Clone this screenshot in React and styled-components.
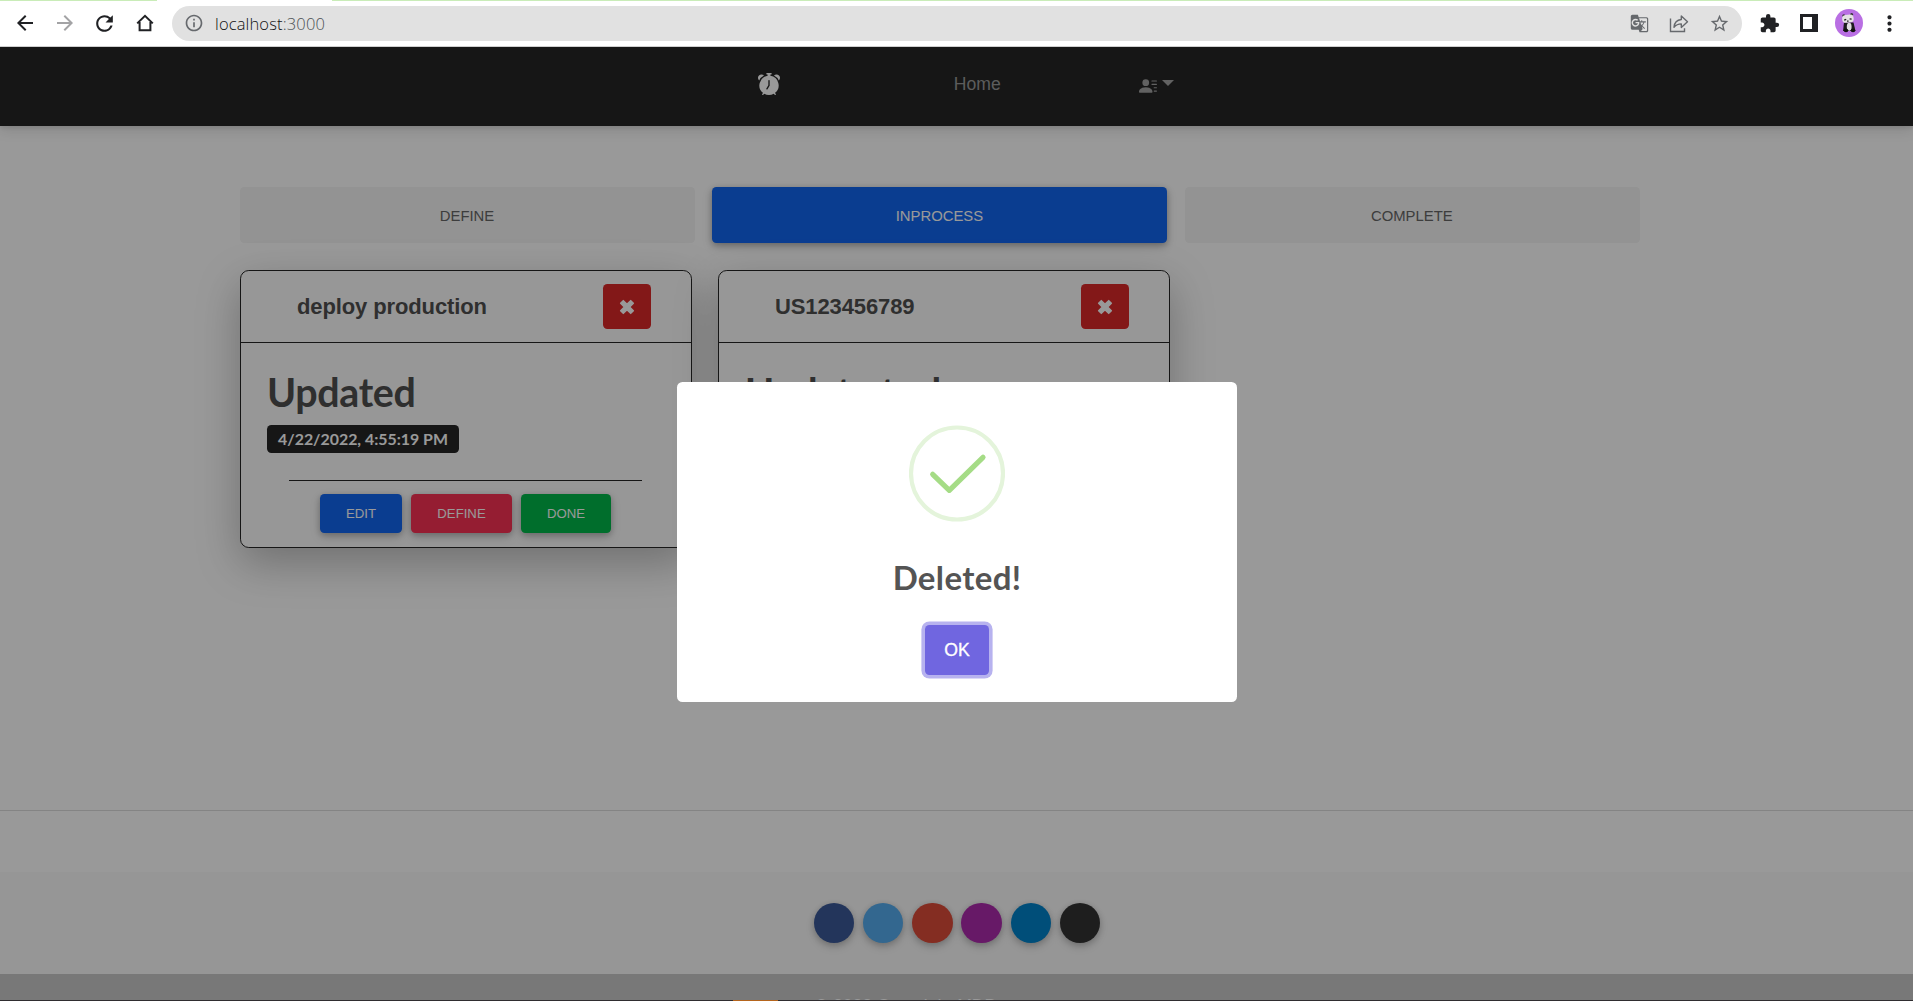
import React from "react";
import styled, { createGlobalStyle, css } from "styled-components";
import {
  MdArrowBack,
  MdArrowForward,
  MdRefresh,
  MdInfoOutline,
  MdGTranslate,
  MdStarBorder,
  MdExtension,
  MdMoreVert,
} from "react-icons/md";
import { BsAlarmFill, BsPersonLinesFill } from "react-icons/bs";

const sans = `"Liberation Sans", Arial, sans-serif`;
const lato = `Lato, "Open Sans", sans-serif`;

const GlobalStyle = createGlobalStyle`
  *, *::before, *::after { box-sizing: border-box; }
  body { margin: 0; background: #fff; font-family: ${sans}; overflow: hidden; }
  button { font-family: inherit; border: 0; margin: 0; padding: 0; }
  h1, h2, h5, p { margin: 0; }
  svg { display: block; flex: none; }
`;

const Window = styled.div`
  display: flex;
  flex-direction: column;
  width: 100%;
  height: 1001px;
  overflow: hidden;
`;

/* Browser toolbar */
const TabEdge = styled.div`
  display: flex;
  justify-content: space-between;
  height: 1px;
  flex: none;
`;
const TabStrip = styled.span`
  width: ${(p) => p.$width}px;
  background: #c9ecb8;
`;
const Toolbar = styled.div`
  display: flex;
  align-items: center;
  flex: none;
  height: 46px;
  padding: 0 4px 1px 4.5px;
  background: #fff;
  border-bottom: 1px solid #cfcfcf;
`;
const ToolCell = styled.span`
  display: flex;
  align-items: center;
  justify-content: center;
  width: 40px;
  height: 35px;
  color: ${(p) => p.$color || "#202124"};
`;
const AddressBar = styled.div`
  display: flex;
  align-items: center;
  flex: 1;
  height: 35px;
  margin: 0 7px 0 7.5px;
  padding: 0 3px 0 12px;
  border-radius: 18px;
  background: #e1e1e1;
`;
const Url = styled.span`
  flex: 1;
  padding: 1px 0 0 11px;
  font: 300 16.5px/22px "Open Sans", "Noto Sans", sans-serif;
  letter-spacing: 0.15px;
  color: #111214;
`;
const Port = styled.span`
  color: #4d5155;
`;

/* Page */
const Page = styled.div`
  position: relative;
  display: flex;
  flex-direction: column;
  flex: none;
  height: 953px;
  overflow: hidden;
  background: #fff;
`;
const Navbar = styled.nav`
  position: relative;
  display: flex;
  justify-content: center;
  align-items: flex-start;
  flex: none;
  height: 79px;
  padding: 22px 0 0 18px;
  background: #262626;
  box-shadow: 0 4px 13px rgba(0, 0, 0, 0.12), 0 2px 4px rgba(0, 0, 0, 0.08);
`;
const NavItems = styled.div`
  display: flex;
  align-items: center;
  width: 416px;
  height: 30px;
`;
const Brand = styled.span`
  width: 197px;
  color: #fff;
`;
const NavLink = styled.span`
  width: 186px;
  font-size: 17.6px;
  line-height: 28px;
  color: #9a9a9a;
`;
const NavMenu = styled.span`
  display: flex;
  align-items: flex-start;
  padding-top: 3px;
  gap: 4.4px;
  color: #a3a3a3;
`;
const Caret = styled.span`
  margin-top: 3px;
  border: 6px solid transparent;
  border-top-color: currentColor;
  border-bottom: 0;
`;

const Board = styled.main`
  width: 1400px;
  flex: none;
  margin: 61px 0 0 240px;
`;
const Tabs = styled.div`
  display: grid;
  grid-template-columns: repeat(3, 455px);
  gap: 17.4px;
`;
const Tab = styled.button`
  height: 56px;
  padding: 2px 1px 0 0;
  border-radius: 4.4px;
  font-size: 14.85px;
  line-height: 15px;
  text-transform: uppercase;
  color: #666;
  background: #f5f5f5;
  ${(p) =>
    p.$active &&
    css`
      color: #fff;
      background: #1266f1;
      box-shadow: 0 2px 6px rgba(0, 0, 0, 0.25), 0 4px 11px rgba(0, 0, 0, 0.14);
    `}
`;
const Cards = styled.div`
  display: flex;
  gap: 26px;
  margin-top: 27px;
`;
const Card = styled.article`
  width: 452px;
  height: 278px;
  border: 1px solid #262626;
  border-radius: 8.8px;
  background: #fcfcfc;
  box-shadow: 0 15px 44px rgba(0, 0, 0, 0.27);
`;
const CardHeader = styled.header`
  display: flex;
  align-items: center;
  justify-content: space-between;
  height: 72px;
  padding: 0 40px 0 56px;
  border-bottom: 1px solid #262626;
`;
const CardTitle = styled.h5`
  font: 700 22px/26px ${sans};
  letter-spacing: -0.12px;
  color: #4f4f4f;
`;
const DeleteButton = styled.button`
  display: flex;
  align-items: center;
  justify-content: center;
  width: 48px;
  height: 45px;
  border-radius: 4.4px;
  color: #fff;
  background: #db2828;
`;
const CardBody = styled.div`
  padding: 25px 26px 0;
`;
const Status = styled.h1`
  font: 700 39.4px/48px ${lato};
  letter-spacing: -0.35px;
  color: #4f4f4f;
  white-space: nowrap;
`;
const DateBadge = styled.span`
  display: flex;
  align-items: center;
  justify-content: center;
  width: 192px;
  height: 28px;
  margin-top: 9px;
  border-radius: 4.4px;
  font: 700 15.9px/16px ${lato};
  white-space: nowrap;
  color: #fff;
  background: #262626;
`;
const Actions = styled.div`
  display: flex;
  justify-content: center;
  gap: 9px;
  margin: 26.5px 23px 0 22px;
  padding-top: 13px;
  border-top: 1px solid #262626;
`;
const Action = styled.button`
  height: 39px;
  width: ${(p) => p.$width}px;
  padding-top: 1px;
  border-radius: 4.4px;
  font-size: 13.2px;
  color: #fff;
  text-transform: uppercase;
  background: ${(p) => p.$color};
  box-shadow: 0 2px 6px rgba(0, 0, 0, 0.22), 0 4px 11px rgba(0, 0, 0, 0.14);
`;

const Footer = styled.footer`
  margin-top: auto;
  flex: none;
  height: 190px;
  border-top: 1px solid #dcdcdc;
  padding-top: 61px;
`;
const Social = styled.div`
  display: flex;
  justify-content: center;
  gap: 8.8px;
  height: 102px;
  padding: 31px 0 0 1px;
  background: #fbfbfb;
`;
const SocialButton = styled.span`
  width: 40.4px;
  height: 40.4px;
  border-radius: 50%;
  background: ${(p) => p.$color};
  box-shadow: 0 2px 6px rgba(0, 0, 0, 0.2), 0 4px 12px rgba(0, 0, 0, 0.12);
`;
const Copyright = styled.p`
  height: 44px;
  padding-top: 22px;
  font-size: 17.6px;
  line-height: 20px;
  text-align: center;
  color: #fff;
  background: #c9c9c9;
`;
const Taskbar = styled.div`
  flex: none;
  height: 1px;
  padding-left: 733px;
  background: #2f2d30;
`;
const TaskbarActive = styled.div`
  width: 45px;
  height: 1px;
  background: #b5651d;
`;

/* Dialog */
const Backdrop = styled.div`
  position: absolute;
  inset: 0;
  display: flex;
  align-items: flex-start;
  justify-content: center;
  padding-top: 335px;
  background: rgba(0, 0, 0, 0.4);
`;
const Dialog = styled.div`
  display: flex;
  flex-direction: column;
  align-items: center;
  width: 560px;
  height: 320px;
  margin-left: 1px;
  padding-top: 43px;
  border-radius: 5.5px;
  background: #fff;
`;
const DialogTitle = styled.h2`
  margin-top: 35px;
  font: 700 33px/40px ${lato};
  letter-spacing: 0.35px;
  color: #545454;
`;
const Confirm = styled.button`
  width: 64px;
  height: 50px;
  margin-top: 28px;
  border-radius: 4.4px;
  font-size: 17.6px;
  color: #fff;
  -webkit-text-stroke: 0.35px #fff;
  background: #7066e0;
  box-shadow: 0 0 0 3.6px rgba(112, 102, 224, 0.5);
`;

const HomeIcon = () => (
  <svg width="18" height="18" viewBox="0 0 18 18" fill="none" stroke="#202124" strokeWidth="2">
    <path d="M1.2 9.4 9 1.9l7.8 7.5M3.6 8v8.3h10.8V8" />
  </svg>
);

const ShareIcon = () => (
  <svg width="20" height="19" viewBox="0 0 20 19" fill="none" stroke="#66696d" strokeWidth="1.4">
    <path d="M1.5 4.5v13h14v-3.2" />
    <path d="M5 13.2C5.4 8.8 7.8 5.9 12.3 5.5V1.9l6.2 5.8-6.2 5.7V9.9C9.2 9.9 6.9 11 5 13.2z" strokeLinejoin="round" />
  </svg>
);

const PanelIcon = () => (
  <svg width="18" height="18" viewBox="0 0 18 18">
    <path fill="#202124" fillRule="evenodd" d="M0 0h18v18H0zM3 3v12h9V3z" />
  </svg>
);

const PandaAvatar = () => (
  <svg width="28" height="28" viewBox="0 0 28 28">
    <circle cx="14" cy="14" r="14" fill="#b96fe3" />
    <circle cx="8.8" cy="6.8" r="1.5" fill="#333" />
    <circle cx="16.6" cy="5.6" r="1.5" fill="#333" />
    <path d="M9 13.5h9.500l2 8.500H8z" fill="#1c1a1d" />
    <ellipse cx="14.2" cy="17.8" rx="2.400" ry="4" fill="#e0dde0" />
    <ellipse cx="11" cy="21.500" rx="2.300" ry="1.700" fill="#111" />
    <ellipse cx="18" cy="21.500" rx="2.300" ry="1.700" fill="#111" />
    <rect x="7.200" y="5.800" width="11.500" height="7.800" rx="3.500" fill="#e4e1e4" transform="rotate(-6 13 10)" />
    <path d="M9.200 11.200l2-.8M14.600 9.900l2 .3M12 12.200h1.600" stroke="#222" strokeWidth="1.300" />
  </svg>
);

const CrossIcon = () => (
  <svg width="16" height="16" viewBox="0 0 16 16" fill="currentColor" stroke="currentColor" strokeWidth="1.6" strokeLinejoin="round">
    <path d="M4.3 1.7 8 5.4l3.7-3.7 2.6 2.6L10.6 8l3.7 3.7-2.6 2.6L8 10.6l-3.7 3.7-2.6-2.6L5.4 8 1.7 4.3z" />
  </svg>
);

const SuccessIcon = () => (
  <svg width="96" height="97" viewBox="0.5 0 96 97" fill="none">
    <circle cx="48.5" cy="48.5" r="46" stroke="#e4f4db" strokeWidth="4.2" />
    <path d="M24.2 49.3 40.8 65.3 74.5 32.3" stroke="#a5dc86" strokeWidth="5.2" strokeLinecap="round" strokeLinejoin="round" />
  </svg>
);

const tasks = [
  { title: "deploy production", status: "Updated" },
  { title: "US123456789", status: "Update task" },
];

const socialColors = ["#3b5998", "#55acee", "#dd4b39", "#ac2bac", "#0082ca", "#333333"];

function TaskCard({ title, status }) {
  return (
    <Card>
      <CardHeader>
        <CardTitle>{title}</CardTitle>
        <DeleteButton aria-label="Delete">
          <CrossIcon />
        </DeleteButton>
      </CardHeader>
      <CardBody>
        <Status>{status}</Status>
        <DateBadge>4/22/2022, 4:55:19 PM</DateBadge>
        <Actions>
          <Action $width={82} $color="#1266f1">Edit</Action>
          <Action $width={101} $color="#f93154">Define</Action>
          <Action $width={90} $color="#00b74a">Done</Action>
        </Actions>
      </CardBody>
    </Card>
  );
}

export default function App() {
  return (
    <Window>
      <GlobalStyle />
      <TabEdge>
        <TabStrip $width={157} />
        <TabStrip $width={1581} />
      </TabEdge>
      <Toolbar>
        <ToolCell><MdArrowBack size={24} /></ToolCell>
        <ToolCell $color="#a3a3a5"><MdArrowForward size={24} /></ToolCell>
        <ToolCell><MdRefresh size={25} /></ToolCell>
        <ToolCell><HomeIcon /></ToolCell>
        <AddressBar>
          <MdInfoOutline size={20} color="#66696d" />
          <Url>localhost<Port>:3000</Port></Url>
          <ToolCell $color="#66696d"><MdGTranslate size={19} /></ToolCell>
          <ToolCell><ShareIcon /></ToolCell>
          <ToolCell $color="#66696d"><MdStarBorder size={21} /></ToolCell>
        </AddressBar>
        <ToolCell><MdExtension size={21} /></ToolCell>
        <ToolCell><PanelIcon /></ToolCell>
        <ToolCell><PandaAvatar /></ToolCell>
        <ToolCell><MdMoreVert size={25} /></ToolCell>
      </Toolbar>
      <Page>
        <Navbar>
          <NavItems>
            <Brand><BsAlarmFill size={22} /></Brand>
            <NavLink>Home</NavLink>
            <NavMenu>
              <BsPersonLinesFill size={18} />
              <Caret />
            </NavMenu>
          </NavItems>
        </Navbar>
        <Board>
          <Tabs>
            <Tab>Define</Tab>
            <Tab $active>Inprocess</Tab>
            <Tab>Complete</Tab>
          </Tabs>
          <Cards>
            {tasks.map((task) => (
              <TaskCard key={task.title} {...task} />
            ))}
          </Cards>
        </Board>
        <Footer>
          <Social>
            {socialColors.map((color) => (
              <SocialButton key={color} $color={color} />
            ))}
          </Social>
          <Copyright>© 2022 Copyright MDBootstrap.com</Copyright>
        </Footer>
        <Backdrop>
          <Dialog role="dialog">
            <SuccessIcon />
            <DialogTitle>Deleted!</DialogTitle>
            <Confirm>OK</Confirm>
          </Dialog>
        </Backdrop>
      </Page>
      <Taskbar>
        <TaskbarActive />
      </Taskbar>
    </Window>
  );
}
